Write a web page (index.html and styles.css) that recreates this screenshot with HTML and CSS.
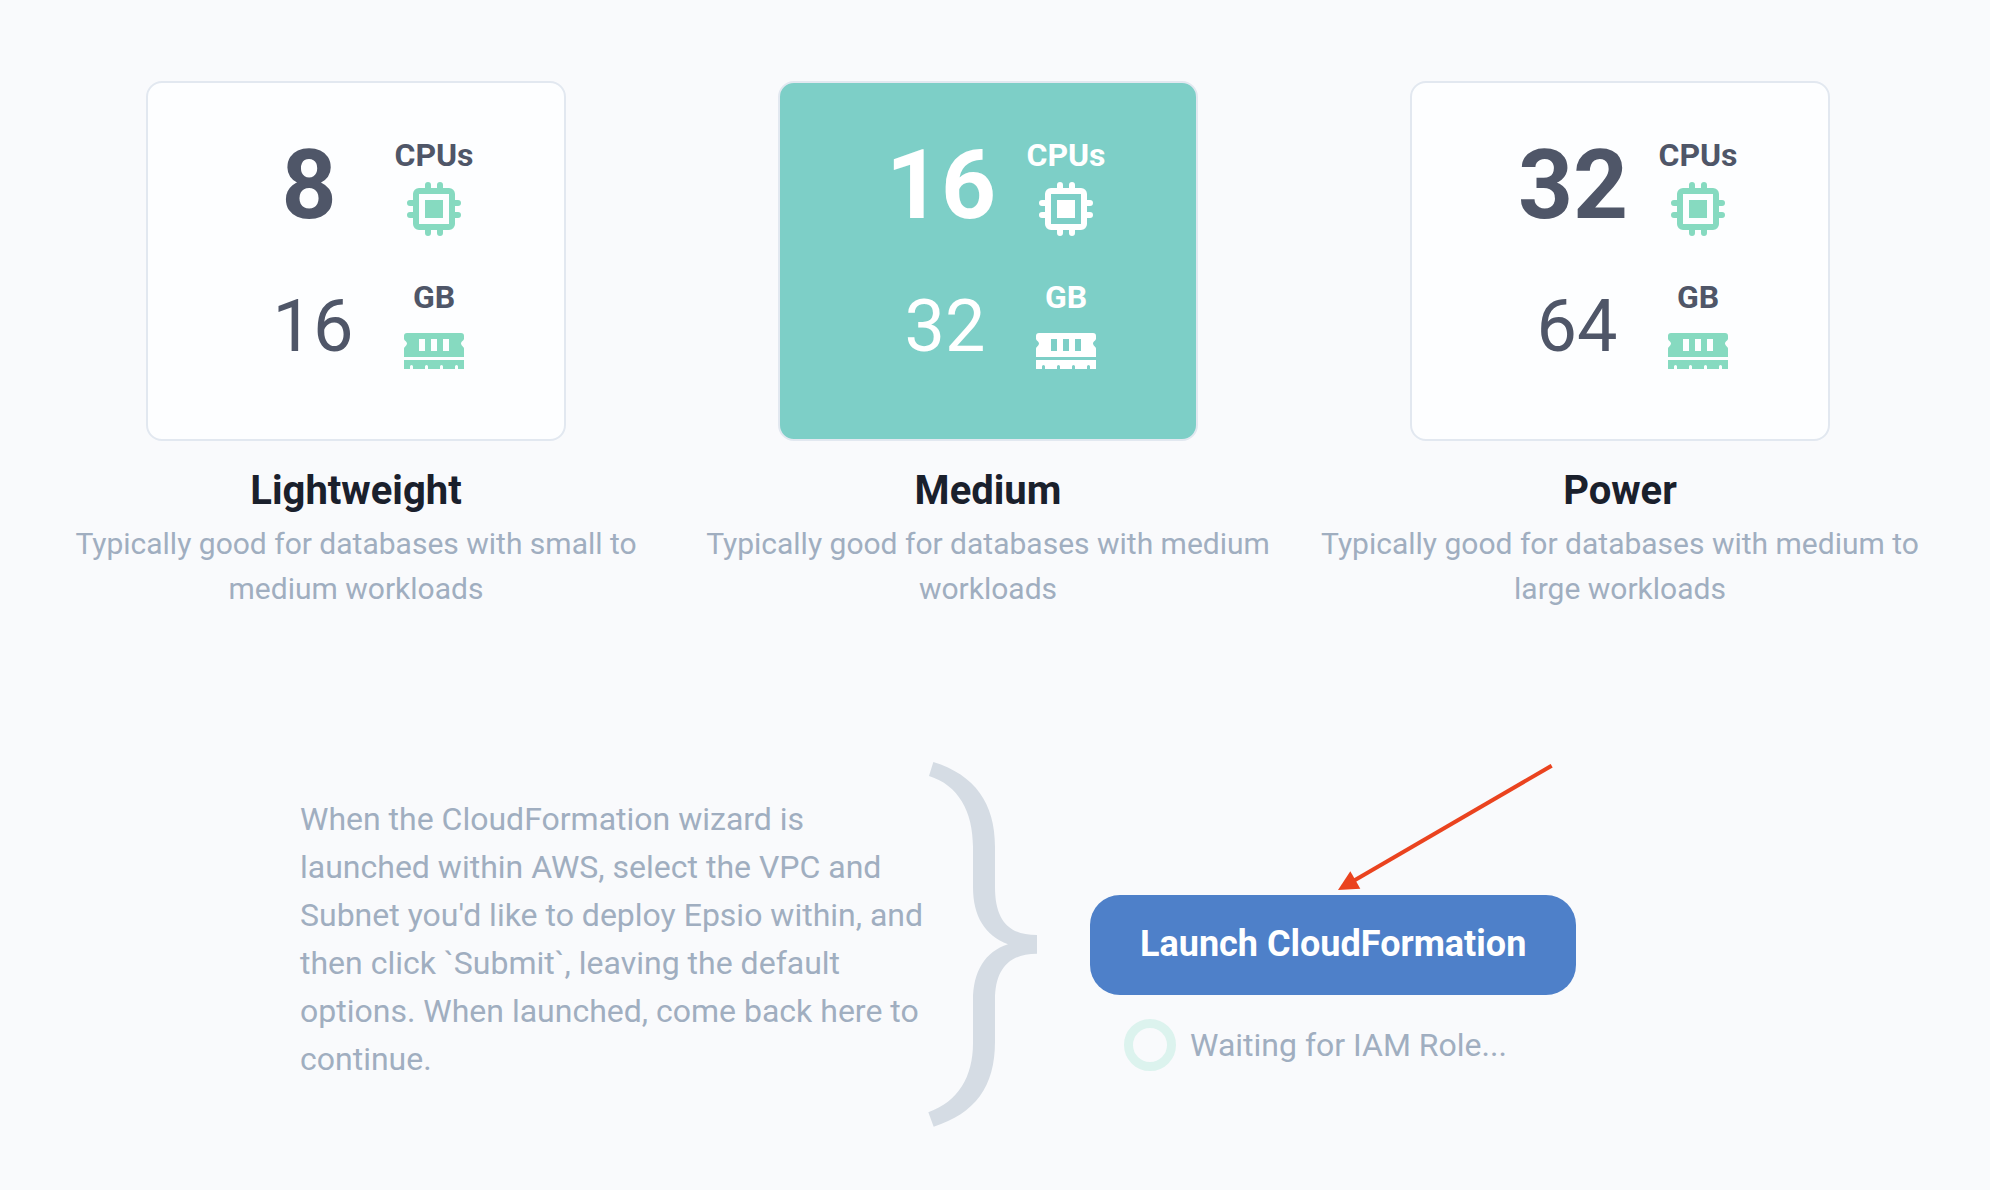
FILE: index.html
```html
<!DOCTYPE html>
<html lang="en">
<head>
  <meta charset="utf-8">
  <meta name="viewport" content="width=device-width, initial-scale=1">
  <title>Deploy Epsio</title>
  <link rel="stylesheet" href="styles.css">
</head>
<body>
  <svg class="sprite" aria-hidden="true">
    <symbol id="icon-cpu" viewBox="0 0 24 24">
      <path fill-rule="evenodd" d="M7 5H17A2 2 0 0 1 19 7V17A2 2 0 0 1 17 19H7A2 2 0 0 1 5 17V7A2 2 0 0 1 7 5ZM7 7V17H17V7ZM9 9H15V15H9Z"/>
      <path d="M9 5V4A1 1 0 0 1 11 4V5ZM13 5V4A1 1 0 0 1 15 4V5ZM9 19V20A1 1 0 0 0 11 20V19ZM13 19V20A1 1 0 0 0 15 20V19ZM5 9H4A1 1 0 0 0 4 11H5ZM5 13H4A1 1 0 0 0 4 15H5ZM19 9H20A1 1 0 0 1 20 11H19ZM19 13H20A1 1 0 0 1 20 15H19Z"/>
    </symbol>
    <symbol id="icon-ram" viewBox="0 0 24 24">
      <path fill-rule="evenodd" d="M3 6H21A1 1 0 0 1 22 7V7.8C22 8.5 21 8.8 21 9.5C21 10.2 22 10.6 22 11.2V14H2V11.2C2 10.6 3 10.2 3 9.5C3 8.8 2 8.5 2 7.8V7A1 1 0 0 1 3 6ZM7 8V12H9V8ZM11 8V12H13V8ZM15 8V12H17V8Z"/>
      <path d="M2 15H22V18H20V17.2A.5 .5 0 0 0 19 17.2V18H15V17.2A.5 .5 0 0 0 14 17.2V18H10V17.2A.5 .5 0 0 0 9 17.2V18H5V17.2A.5 .5 0 0 0 4 17.2V18H2Z"/>
    </symbol>
  </svg>

  <main class="page">
    <div class="plans" role="radiogroup" aria-label="Instance size">
      <label class="plan">
        <input class="plan-input" type="radio" name="plan" value="lightweight">
        <span class="plan-card">
          <span class="amount amount-cpu">8</span>
          <span class="unit">CPUs<svg class="icon" aria-hidden="true"><use href="#icon-cpu"/></svg></span>
          <span class="amount amount-memory">16</span>
          <span class="unit">GB<svg class="icon" aria-hidden="true"><use href="#icon-ram"/></svg></span>
        </span>
        <span class="plan-name">Lightweight</span>
        <span class="plan-text">Typically good for databases with small to medium workloads</span>
      </label>

      <label class="plan">
        <input class="plan-input" type="radio" name="plan" value="medium" checked>
        <span class="plan-card">
          <span class="amount amount-cpu">16</span>
          <span class="unit">CPUs<svg class="icon" aria-hidden="true"><use href="#icon-cpu"/></svg></span>
          <span class="amount amount-memory">32</span>
          <span class="unit">GB<svg class="icon" aria-hidden="true"><use href="#icon-ram"/></svg></span>
        </span>
        <span class="plan-name">Medium</span>
        <span class="plan-text">Typically good for databases with medium workloads</span>
      </label>

      <label class="plan">
        <input class="plan-input" type="radio" name="plan" value="power">
        <span class="plan-card">
          <span class="amount amount-cpu">32</span>
          <span class="unit">CPUs<svg class="icon" aria-hidden="true"><use href="#icon-cpu"/></svg></span>
          <span class="amount amount-memory">64</span>
          <span class="unit">GB<svg class="icon" aria-hidden="true"><use href="#icon-ram"/></svg></span>
        </span>
        <span class="plan-name">Power</span>
        <span class="plan-text">Typically good for databases with medium to large workloads</span>
      </label>
    </div>

    <section class="launch">
      <p class="launch-text">When the CloudFormation wizard is launched within AWS, select the VPC and Subnet you'd like to deploy Epsio within, and then click `Submit`, leaving the default options. When launched, come back here to continue.</p>
      <svg class="brace" viewBox="75 66 336 1095" aria-hidden="true">
        <path d="M100 66C225 105 285 190 285 320V440C285 540 325 585 411 585V641C325 641 285 690 285 780V905C285 1040 225 1120 101 1160L85 1117C175 1085 219 1010 219 910V780C219 695 255 635 324 613C255 585 219 530 219 440V320C219 215 175 135 87 108Z"/>
      </svg>
      <div class="launch-action">
        <svg class="arrow" viewBox="774 72 645 381" aria-hidden="true">
          <path d="M1415 77L820 423" fill="none" stroke="currentColor" stroke-width="12"/>
          <path d="M774 450L811 394L841 446Z" fill="currentColor"/>
        </svg>
        <button class="launch-button" type="button">Launch CloudFormation</button>
        <div class="status" role="status"><span class="spinner"></span>Waiting for IAM Role...</div>
      </div>
    </section>
  </main>
</body>
</html>
```

FILE: styles.css
```css
* {
  box-sizing: border-box;
}

body {
  margin: 0;
  background: #f9fafc;
  color: #a0aec0;
  font-family: Roboto, sans-serif;
  font-size: 32px;
  line-height: 48px;
}

.sprite {
  display: none;
}

.page {
  padding: 81px 54px 60px 40px;
}

/* Instance sizes */
.plans {
  display: grid;
  grid-template-columns: repeat(3, 1fr);
}

.plan {
  display: flex;
  flex-direction: column;
  align-items: center;
  padding: 0 16px;
  text-align: center;
  cursor: pointer;
}

.plan-input {
  position: absolute;
  opacity: 0;
}

.plan-card {
  display: grid;
  grid-template-columns: 110px 80px;
  column-gap: 30px;
  row-gap: 34px;
  justify-content: center;
  width: 420px;
  max-width: 100%;
  padding: 54px 0 52px 16px;
  border: 2px solid #e2e8f0;
  border-radius: 16px;
  background: #fdfeff;
  color: #4f5668;
}

.plan-input:checked + .plan-card {
  background: #7dcfc7;
  color: #fff;
}

.plan-input:focus-visible + .plan-card {
  outline: 3px solid #4e80c9;
}

.amount {
  line-height: 96px;
}

.amount-cpu {
  font-size: 96px;
  font-weight: 700;
}

.amount-memory {
  padding-left: 8px;
  font-size: 72px;
}

.unit {
  display: flex;
  flex-direction: column;
  align-items: center;
  font-weight: 700;
  line-height: 36px;
}

.icon {
  width: 72px;
  height: 72px;
  fill: #86dac0;
}

.plan-input:checked + .plan-card .icon {
  fill: #fff;
}

.plan-name {
  margin-top: 20px;
  color: #1a202c;
  font-size: 40px;
  font-weight: 700;
  line-height: 60px;
}

.plan-text {
  font-size: 30px;
  line-height: 45px;
}

/* CloudFormation step */
.launch {
  display: flex;
  align-items: flex-start;
  margin-top: 151px;
  padding-left: 260px;
}

.launch-text {
  width: 625px;
  margin: 0;
  padding-top: 33px;
}

.brace {
  flex: none;
  width: 112px;
  height: 365px;
  fill: #d5dce4;
}

.launch-action {
  position: relative;
  margin: 133px 0 0 53px;
}

.launch-button {
  height: 100px;
  padding: 0 50px 2px;
  border: 0;
  border-radius: 30px;
  background: #4e80c9;
  color: #fff;
  font: 700 36px/48px Roboto, sans-serif;
  white-space: nowrap;
  cursor: pointer;
}

.arrow {
  position: absolute;
  top: -131px;
  left: 248px;
  width: 215px;
  height: 127px;
  color: #ea431f;
}

.status {
  display: flex;
  align-items: center;
  gap: 14px;
  margin-top: 24px;
  padding-left: 34px;
}

.spinner {
  width: 52px;
  height: 52px;
  border: 9px solid #dcf3ee;
  border-radius: 50%;
}
```
